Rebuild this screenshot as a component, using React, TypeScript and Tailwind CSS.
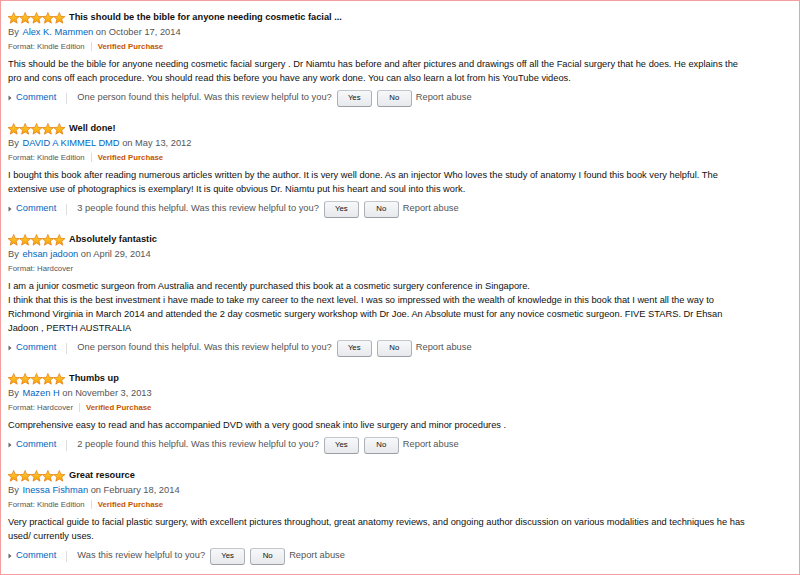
interface Review {
  title: string;
  author: string;
  date: string;
  format: string;
  verified: boolean;
  body: string[];
  helpful: string;
}

const reviews: Review[] = [
  {
    title: "This should be the bible for anyone needing cosmetic facial ...",
    author: "Alex K. Mammen",
    date: "October 17, 2014",
    format: "Kindle Edition",
    verified: true,
    body: [
      "This should be the bible for anyone needing cosmetic facial surgery . Dr Niamtu has before and after pictures and drawings off all the Facial surgery that he does. He explains the",
      "pro and cons off each procedure. You should read this before you have any work done. You can also learn a lot from his YouTube videos.",
    ],
    helpful: "One person found this helpful. ",
  },
  {
    title: "Well done!",
    author: "DAVID A KIMMEL DMD",
    date: "May 13, 2012",
    format: "Kindle Edition",
    verified: true,
    body: [
      "I bought this book after reading numerous articles written by the author. It is very well done. As an injector Who loves the study of anatomy I found this book very helpful. The",
      "extensive use of photographics is exemplary! It is quite obvious Dr. Niamtu put his heart and soul into this work.",
    ],
    helpful: "3 people found this helpful. ",
  },
  {
    title: "Absolutely fantastic",
    author: "ehsan jadoon",
    date: "April 29, 2014",
    format: "Hardcover",
    verified: false,
    body: [
      "I am a junior cosmetic surgeon from Australia and recently purchased this book at a cosmetic surgery conference in Singapore.",
      "I think that this is the best investment i have made to take my career to the next level. I was so impressed with the wealth of knowledge in this book that I went all the way to",
      "Richmond Virginia in March 2014 and attended the 2 day cosmetic surgery workshop with Dr Joe. An Absolute must for any novice cosmetic surgeon. FIVE STARS. Dr Ehsan",
      "Jadoon , PERTH AUSTRALIA",
    ],
    helpful: "One person found this helpful. ",
  },
  {
    title: "Thumbs up",
    author: "Mazen H",
    date: "November 3, 2013",
    format: "Hardcover",
    verified: true,
    body: [
      "Comprehensive easy to read and has accompanied DVD with a very good sneak into live surgery and minor procedures .",
    ],
    helpful: "2 people found this helpful. ",
  },
  {
    title: "Great resource",
    author: "Inessa Fishman",
    date: "February 18, 2014",
    format: "Kindle Edition",
    verified: true,
    body: [
      "Very practical guide to facial plastic surgery, with excellent pictures throughout, great anatomy reviews, and ongoing author discussion on various modalities and techniques he has",
      "used/ currently uses.",
    ],
    helpful: "",
  },
];

// five-point star path centred on cx
const starPath = (cx: number, cy: number, R: number, r: number) => {
  const pts: string[] = [];
  for (let i = 0; i < 10; i++) {
    const rad = i % 2 === 0 ? R : r;
    const a = ((-90 + i * 36) * Math.PI) / 180;
    pts.push(`${(cx + rad * Math.cos(a)).toFixed(2)},${(cy + rad * Math.sin(a)).toFixed(2)}`);
  }
  return `M${pts.join("L")}Z`;
};

const Stars = () => (
  <svg width="57" height="12" viewBox="0 0 57 12" className="shrink-0">
    <defs>
      <linearGradient id="starFill" x1="0" y1="0" x2="0" y2="1">
        <stop offset="0" stopColor="#ffd23c" />
        <stop offset="1" stopColor="#f7a000" />
      </linearGradient>
    </defs>
    {[0, 1, 2, 3, 4].map((i) => (
      <path
        key={i}
        d={starPath(5.7 + i * 11.4, 6.4, 5.9, 2.6)}
        fill="url(#starFill)"
        stroke="#e2780c"
        strokeWidth="0.7"
        strokeLinejoin="round"
      />
    ))}
  </svg>
);

const VoteButton = ({ label }: { label: string }) => (
  <button className="w-[35px] h-[17px] rounded-[3px] border border-[#adb1b8] border-t-[#c3c6cb] border-b-[#9a9ea5] bg-gradient-to-b from-[#f7f8fa] to-[#e7e9ec] text-[7.8px] text-[#111] leading-none">
    {label}
  </button>
);

const ReviewItem = ({ review }: { review: Review }) => (
  <div>
    <div className="flex items-center h-[14px] gap-[4px]">
      <Stars />
      <span className="text-[9.25px] font-bold text-[#111] whitespace-nowrap">{review.title}</span>
    </div>
    <div className="leading-[15px] text-[9.3px] text-[#555] whitespace-nowrap">
      By <a className="text-[#0066c0] ml-px">{review.author}</a> on {review.date}
    </div>
    <div className="flex items-center h-[13px] text-[7.8px] whitespace-nowrap">
      <span className="text-[#555]">Format: {review.format}</span>
      {review.verified && (
        <>
          <span className="mx-[6px] w-px h-[9px] bg-[#ddd]" />
          <span className="font-bold text-[#c45500]">Verified Purchase</span>
        </>
      )}
    </div>
    <div className="mt-[4px] text-[9.3px] leading-[14px] text-[#111]">
      {review.body.map((line, i) => (
        <div key={i} className="whitespace-nowrap">
          {line}
        </div>
      ))}
    </div>
    <div className="mt-[4px] flex items-center h-[18px] text-[9.3px] whitespace-nowrap">
      <svg width="4" height="6" viewBox="0 0 4 6" className="mr-[4px]">
        <path d="M0.5 0.5L3.5 3L0.5 5.5Z" fill="#666" />
      </svg>
      <a className="text-[#0066c0]">Comment</a>
      <span className="mx-[10px] w-px h-[11px] bg-[#ddd]" />
      <span className="text-[#555]">{review.helpful}Was this review helpful to you?</span>
      <div className="ml-[5px] flex gap-[5px]">
        <VoteButton label="Yes" />
        <VoteButton label="No" />
      </div>
      <span className="ml-[4px] text-[#555]">Report abuse</span>
    </div>
  </div>
);

const App = () => {
  return (
    <div
      className="w-[800px] h-[575px] overflow-hidden bg-white border border-[#f49e9e] box-border"
      style={{ fontFamily: '"Liberation Sans", Arial, sans-serif' }}
    >
      <div className="pt-[10px] pl-[7px] flex flex-col gap-[15px]">
        {reviews.map((r, i) => (
          <ReviewItem key={i} review={r} />
        ))}
      </div>
    </div>
  );
};

export default App;
